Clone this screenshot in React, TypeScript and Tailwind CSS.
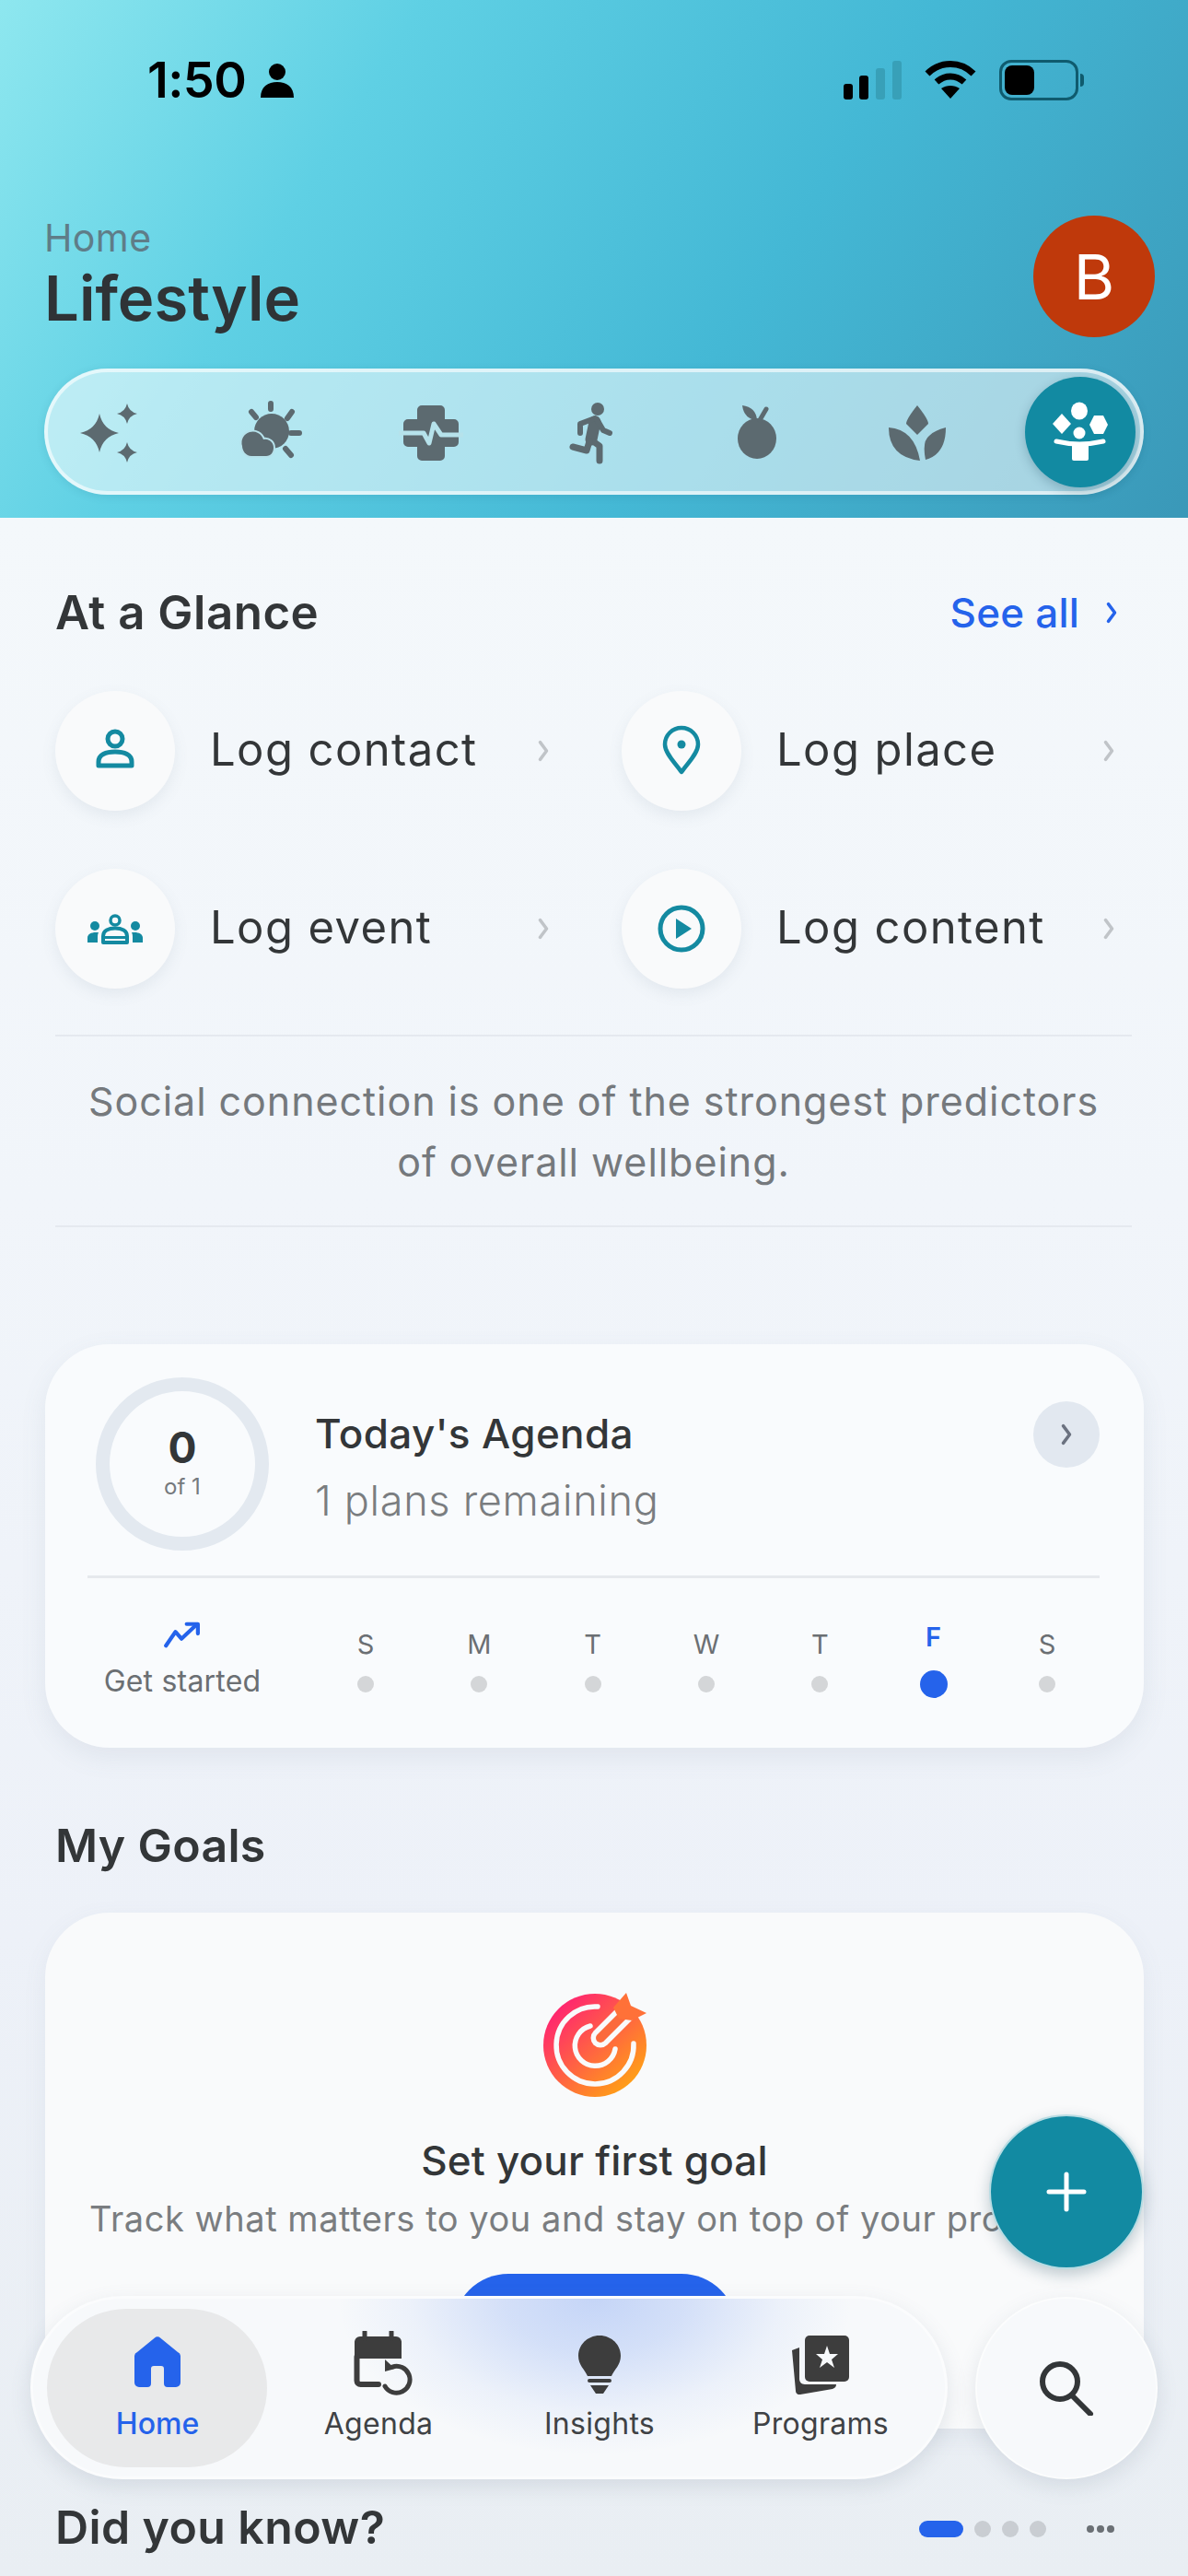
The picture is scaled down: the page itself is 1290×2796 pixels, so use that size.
import React from "react";

const star = (x: number, y: number, r: number) => {
  const k = r * 0.18;
  return `M${x} ${y - r}Q${x + k} ${y - k} ${x + r} ${y}Q${x + k} ${y + k} ${x} ${y + r}Q${x - k} ${y + k} ${x - r} ${y}Q${x - k} ${y - k} ${x} ${y - r}Z`;
};

const DARK = "#5c6a70";
const BG = "#b6e2eb";

function Box({ children }: { children: React.ReactNode }) {
  return (
    <svg viewBox="0 0 80 80" className="w-[80px] h-[80px]" fill={DARK}>
      {children}
    </svg>
  );
}

function Sparkles() {
  return (
    <Box>
      <path d={star(30, 41, 21)} />
      <path d={star(60, 20, 11)} />
      <path d={star(60, 62, 11)} />
    </Box>
  );
}
function SunCloud() {
  return (
    <Box>
      <circle cx="41" cy="39" r="19" />
      <g stroke={DARK} strokeWidth="6" strokeLinecap="round">
        <path d="M40 9V15M19 18L24 24M63 18L58 25M62 41H71M56 58L62 65" />
      </g>
      <path d="M9 55a12 12 0 0 1 23-7a9 9 0 0 1 11 9c0 5-3 9-8 9H19c-6 0-10-6-10-11Z" stroke={BG} strokeWidth="4" paintOrder="stroke" />
    </Box>
  );
}
function MedCross() {
  return (
    <Box>
      <g transform="translate(-3 0)">
        <path d="M31 11H51a5 5 0 0 1 5 5V26H66a5 5 0 0 1 5 5V51a5 5 0 0 1-5 5H56V66a5 5 0 0 1-5 5H31a5 5 0 0 1-5-5V56H16a5 5 0 0 1-5-5V31a5 5 0 0 1 5-5H26V16a5 5 0 0 1 5-5Z" />
        <path d="M6 41H33L39 52L44 31L52 43H76" fill="none" stroke={BG} strokeWidth="5" strokeLinejoin="round" />
      </g>
    </Box>
  );
}
function Runner() {
  return (
    <Box>
      <g transform="translate(-3 0)">
        <circle cx="47" cy="15" r="7" />
        <g fill="none" stroke={DARK} strokeLinecap="round" strokeLinejoin="round">
          <path d="M44 29L40 48" strokeWidth="13" />
          <path d="M28 41V31L44 25" strokeWidth="6" />
          <path d="M46 26L53 38L60 41" strokeWidth="6" />
          <path d="M42 50L49 55V71" strokeWidth="7" />
          <path d="M38 50L35 60L20 56" strokeWidth="7" />
        </g>
      </g>
    </Box>
  );
}
function Apple() {
  return (
    <Box>
      <ellipse cx="41" cy="47" rx="21" ry="22" />
      <path d="M25 11Q40 13 41 27Q27 26 25 11Z" />
      <path d="M51 15L44 27" stroke={DARK} strokeWidth="5" strokeLinecap="round" />
    </Box>
  );
}
function Lotus() {
  return (
    <Box>
      <path d="M39 11Q51 26 51 31L39 43L27 31Q27 26 39 11Z" />
      <path d="M8 35Q36 37 42 71Q8 67 8 35Z" />
      <path d="M70 35Q70 64 48 70Q44 50 52 44Q58 38 70 35Z" />
    </Box>
  );
}
function ActiveIcon() {
  return (
    <svg viewBox="0 0 80 80" className="w-[80px] h-[80px]" fill="#ffffff">
      <ellipse cx="39" cy="17" rx="9" ry="9.5" />
      <path d="M20 20L30 31L20 42L10 31Z" />
      <path d="M55 22H65L70 32L65 42H55L50 32Z" />
      <circle cx="39" cy="41" r="6.5" />
      <path d="M14 50Q39 56 65 50" fill="none" stroke="#ffffff" strokeWidth="5" strokeLinecap="round" />
      <path d="M31 54H49V69a2 2 0 0 1-2 2H33a2 2 0 0 1-2-2Z" />
    </svg>
  );
}

function Chevron({ color, w = 3, className }: { color: string; w?: number; className: string }) {
  return (
    <svg viewBox="0 0 12 24" className={className} fill="none" stroke={color} strokeWidth={w} strokeLinecap="round" strokeLinejoin="round">
      <path d="M3 4L9 12L3 20" />
    </svg>
  );
}

const TEAL = "#148aa1";

const PersonLine = () => (
  <svg viewBox="0 0 60 60" className="w-[60px] h-[60px]" fill="none" stroke={TEAL} strokeWidth="5">
    <circle cx="30" cy="17" r="8" />
    <path d="M12 46V42C12 34 20 31 30 31S48 34 48 42V46Z" strokeLinejoin="round" />
  </svg>
);
const PinLine = () => (
  <svg viewBox="0 0 60 60" className="w-[60px] h-[60px]" fill="none" stroke={TEAL} strokeWidth="4.5">
    <path d="M30 53C24 44 12 33 12 23A18 18 0 0 1 48 23C48 33 36 44 30 53Z" strokeLinejoin="round" />
    <circle cx="30" cy="23" r="4.5" fill={TEAL} stroke="none" />
  </svg>
);
const GroupLine = () => (
  <svg viewBox="0 0 60 60" className="w-[60px] h-[60px]" fill={TEAL}>
    <circle cx="30" cy="21" r="5" fill="none" stroke={TEAL} strokeWidth="3.5" />
    <path d="M17 45V38C17 32 23 29.5 30 29.5S43 32 43 38V45Z" fill="none" stroke={TEAL} strokeWidth="4" strokeLinejoin="round" />
    <path d="M17 38H43V41H17Z" />
    <circle cx="8" cy="27" r="5" />
    <circle cx="52" cy="27" r="5" />
    <path d="M0 45V40C0 36 4 34 9 34H12C11 36 11 38 11 40V45Z" />
    <path d="M60 45V40C60 36 56 34 51 34H48C49 36 49 38 49 40V45Z" />
  </svg>
);
const PlayLine = () => (
  <svg viewBox="0 0 60 60" className="w-[60px] h-[60px]" fill="none" stroke={TEAL} strokeWidth="5">
    <circle cx="30" cy="30" r="23" />
    <path d="M24 19L41 30L24 41Z" fill={TEAL} stroke="none" />
  </svg>
);

function LogItem({ label, icon, left }: { label: string; icon: React.ReactNode; left?: boolean }) {
  return (
    <div className={left ? "flex items-center h-[130px] pr-[60px]" : "flex items-center h-[130px]"}>
      <div className="w-[130px] h-[130px] rounded-full bg-[#f9fafb] shadow-[0_6px_16px_rgba(100,116,139,0.10)] flex items-center justify-center shrink-0">
        {icon}
      </div>
      <span className="ml-[38px] -mt-[3px] flex-1 text-[49px] leading-none text-[#333638] tracking-[1.4px] whitespace-nowrap">{label}</span>
      <Chevron color="#c0c4c8" className="w-[14px] h-[28px] mr-[18px]" />
    </div>
  );
}

function Day({ l, active }: { l: string; active?: boolean }) {
  return (
    <div className="w-[60px] h-[90px] flex flex-col items-center relative">
      <span className={active ? "text-[29px] leading-none font-semibold text-[#2563eb] absolute top-[7px]" : "text-[29px] leading-none text-[#6b6f73] absolute top-[15px]"}>{l}</span>
      <span className={active ? "absolute top-[58px] w-[30px] h-[30px] rounded-full bg-[#2563eb]" : "absolute top-[64px] w-[18px] h-[18px] rounded-full bg-[#d4d6d8]"} />
    </div>
  );
}

function TargetIcon() {
  return (
    <svg viewBox="0 0 120 120" className="w-[120px] h-[120px]" fill="none">
      <defs>
        <linearGradient id="tg" x1="0.1" y1="0.1" x2="0.9" y2="0.95">
          <stop offset="0" stopColor="#ff1f74" />
          <stop offset="1" stopColor="#ffa90f" />
        </linearGradient>
      </defs>
      <path d="M60 4A56 56 0 1 0 116 60A56 56 0 0 0 60 4Z" fill="url(#tg)" />
      <path d="M63 18A42 42 0 1 0 102 58" stroke="#f9fafb" strokeWidth="5.5" strokeLinecap="round" />
      <path d="M55 39A22 22 0 1 0 82 64" stroke="#f9fafb" strokeWidth="5.5" strokeLinecap="round" />
      <path d="M66 52L104 14" stroke="#f9fafb" strokeWidth="21" strokeLinecap="round" />
      <path d="M66 52L92 26" stroke="#fb6a3c" strokeWidth="10" strokeLinecap="round" />
      <path d="M94 3L99 17L116 25L100 33L86 31L80 19Z" fill="#ff7138" />
    </svg>
  );
}

function NavItem({ label, icon, active }: { label: string; icon: React.ReactNode; active?: boolean }) {
  return (
    <div className="w-[240px] flex flex-col items-center">
      <div className="h-[68px] mt-[5px] flex items-center justify-center">{icon}</div>
      <span className={active ? "mt-[15px] text-[32px] leading-[36px] text-[#2563eb] font-medium" : "mt-[15px] text-[32px] leading-[36px] text-[#3f4245] tracking-[0.3px]"}>{label}</span>
    </div>
  );
}

export default function App() {
  return (
    <div className="relative w-[1290px] h-[2796px] overflow-hidden bg-[linear-gradient(180deg,#f4f8fb_560px,#f1f5fa_1300px,#edf1f8_2100px,#e9eef3_2796px)] font-['Inter',sans-serif]">
      {/* Header */}
      <header className="h-[562px] bg-[linear-gradient(122deg,#8ee7ef_0%,#5fd0e4_28%,#44b8d5_62%,#3a98b8_100%)]">
        <div className="h-[234px] flex items-start">
          <div className="ml-[160px] mt-[64px] flex items-center h-[46px]">
            <span className="text-[54px] leading-none font-semibold text-black tracking-[-0.6px]">1:50</span>
            <svg viewBox="0 0 36 38" className="w-[36px] h-[38px] ml-[16px]" fill="#000">
              <circle cx="18" cy="10" r="9" />
              <path d="M0 38C0 26 8 21 18 21S36 26 36 38Z" />
            </svg>
          </div>
          <div className="ml-auto mr-[113px] mt-[65px] flex items-center">
            <svg viewBox="0 0 63 42" className="w-[63px] h-[42px]">
              <rect x="0" y="25" width="10" height="17" rx="3" fill="#000" />
              <rect x="17" y="16" width="10" height="26" rx="3" fill="#000" />
              <rect x="35" y="8" width="10" height="34" rx="3" fill="#38a0b8" />
              <rect x="53" y="0" width="10" height="42" rx="3" fill="#38a0b8" />
            </svg>
            <svg viewBox="0 0 58 42" className="w-[58px] h-[42px] ml-[24px]" fill="none" stroke="#000" strokeWidth="7">
              <path d="M4 14C18 0 40 0 54 14" />
              <path d="M14 23C23 15 35 15 44 23" />
              <path d="M29 41L19 30C25 26 33 26 39 30Z" fill="#000" stroke="none" />
            </svg>
            <div className="ml-[24px] w-[86px] h-[44px] rounded-[13px] border-[3px] border-[#0f5b6e] p-[3px] flex">
              <div className="w-[32px] h-full rounded-[8px] bg-black" />
            </div>
            <div className="w-[4px] h-[14px] rounded-r-full bg-[#0f5b6e] ml-[2px]" />
          </div>
        </div>
        <div className="flex items-start justify-between pl-[48px] pr-[36px] h-[166px]">
          <div className="pt-[1px]">
            <div className="text-[41px] leading-[46px] text-[#5f7d88] tracking-[0.4px]">Home</div>
            <div className="text-[67px] leading-[76px] font-semibold text-[#2f3336] mt-[5px]">Lifestyle</div>
          </div>
          <div className="w-[132px] h-[132px] rounded-full bg-[#bf390b] flex items-center justify-center text-white text-[68px] leading-none">B</div>
        </div>
        <div className="mx-[48px] w-[1194px] h-[137px] rounded-full bg-white/55 border-[4px] border-white/60 shadow-[0_2px_10px_rgba(20,80,110,0.12)] flex items-center justify-between pl-[6px] pr-[5px]">
          {[Sparkles, SunCloud, MedCross, Runner, Apple, Lotus].map((Icon, i) => (
            <div key={i} className="w-[120px] h-[120px] flex items-center justify-center">
              <Icon />
            </div>
          ))}
          <div className="w-[120px] h-[120px] rounded-full bg-[#128aa2] shadow-[0_4px_12px_rgba(15,60,80,0.25)] flex items-center justify-center">
            <ActiveIcon />
          </div>
        </div>
      </header>

      {/* At a Glance */}
      <section className="pl-[60px] pr-[61px] pt-[70px]">
        <div className="flex items-center justify-between h-[64px]">
          <h2 className="text-[51px] leading-none font-semibold text-[#333638] tracking-[0.5px]">At a Glance</h2>
          <div className="flex items-center mr-[15px] mt-[2px]">
            <span className="text-[44px] leading-none font-medium text-[#2563eb] tracking-[0.2px]">See all</span>
            <Chevron color="#2563eb" w={3} className="w-[14px] h-[28px] ml-[28px]" />
          </div>
        </div>
        <div className="grid grid-cols-[615px_1fr] gap-y-[63px] mt-[54px]">
          <LogItem left label="Log contact" icon={<PersonLine />} />
          <LogItem label="Log place" icon={<PinLine />} />
          <LogItem left label="Log event" icon={<GroupLine />} />
          <LogItem label="Log content" icon={<PlayLine />} />
        </div>
        <div className="mt-[50px] border-y-[2px] border-[#e5e9ef] h-[209px] flex items-center justify-center text-center">
          <p className="text-[43px] leading-[66px] text-[#75797d] tracking-[0.95px] whitespace-nowrap">
            Social connection is one of the strongest predictors
            <br />
            of overall wellbeing.
          </p>
        </div>
      </section>

      {/* Agenda card */}
      <section className="mx-[49px] mt-[127px] w-[1193px] h-[438px] rounded-[70px] bg-[#f9fbfd] shadow-[0_10px_28px_rgba(100,116,139,0.10)] pl-[46px] pr-[48px]">
        <div className="h-[254px] flex items-start border-b-[3px] border-[#e6e9ed]">
          <div className="mt-[36px] ml-[9px] w-[188px] h-[188px] rounded-full border-[15px] border-[#e3e9f0] flex flex-col items-center justify-center shrink-0 pb-[6px]">
            <span className="text-[46px] leading-[56px] font-bold text-[#333638]">0</span>
            <span className="text-[24px] leading-[30px] text-[#75797d]">of 1</span>
          </div>
          <div className="ml-[50px] mt-[69px] flex-1">
            <div className="text-[44px] leading-[56px] font-medium text-[#333638] tracking-[0.4px]">Today's Agenda</div>
            <div className="text-[45px] leading-[56px] mt-[17px] text-[#7a7d80] font-light tracking-[0.7px]">1 plans remaining</div>
          </div>
          <div className="mt-[62px] w-[72px] h-[72px] rounded-full bg-[#e2e8f0] flex items-center justify-center">
            <Chevron color="#6b7280" w={3} className="w-[14px] h-[28px]" />
          </div>
        </div>
        <div className="flex items-start pt-[46px]">
          <div className="w-[206px] flex flex-col items-center">
            <svg viewBox="0 0 44 32" className="w-[42px] h-[30px]" fill="none" stroke="#2563eb" strokeWidth="4.5" strokeLinecap="round" strokeLinejoin="round">
              <path d="M3 29L14 13L21 21L38 5" />
              <path d="M27 4H40V15" />
            </svg>
            <span className="mt-[18px] text-[32px] leading-[36px] text-[#6b6f73] tracking-[0.2px] whitespace-nowrap">Get started</span>
          </div>
          <div className="ml-[66px] -mt-[4px] w-[800px] flex justify-between">
            {["S", "M", "T", "W", "T", "F", "S"].map((d, i) => (
              <Day key={i} l={d} active={d === "F"} />
            ))}
          </div>
        </div>
      </section>

      {/* My Goals */}
      <section>
        <h2 className="ml-[60px] mt-[76px] text-[50px] leading-[60px] font-semibold text-[#333638] tracking-[0.3px]">My Goals</h2>
        <div className="mx-[49px] mt-[43px] w-[1193px] h-[560px] rounded-[70px] bg-[#f9fafb] shadow-[0_8px_26px_rgba(100,116,139,0.08)] flex flex-col items-center overflow-hidden">
          <div className="mt-[84px]">
            <TargetIcon />
          </div>
          <div className="mt-[38px] text-[44px] leading-[54px] font-medium text-[#333638] tracking-[0.2px]">Set your first goal</div>
          <div className="mt-[10px] self-start ml-[48px] whitespace-nowrap text-[38px] leading-[52px] text-[#7a7d80] tracking-[0.55px]">Track what matters to you and stay on top of your progress</div>
          <div className="mt-[34px] w-[308px] h-[60px] shrink-0 rounded-t-full bg-[#2563eb]" />
        </div>
      </section>

      {/* Did you know */}
      <section className="absolute left-[60px] right-[61px] top-[2710px] flex items-center justify-between h-[66px]">
        <h2 className="text-[50px] leading-none font-semibold text-[#333638] tracking-[0.4px]">Did you know?</h2>
        <div className="flex items-center gap-[12px] mt-[4px] mr-[13px]">
          <span className="w-[48px] h-[18px] rounded-full bg-[#2563eb]" />
          <span className="w-[18px] h-[18px] rounded-full bg-[#c9cdd2]" />
          <span className="w-[18px] h-[18px] rounded-full bg-[#c9cdd2]" />
          <span className="w-[18px] h-[18px] rounded-full bg-[#c9cdd2]" />
          <span className="ml-[32px] mr-[6px] flex gap-[3px]">
            <i className="w-[8px] h-[8px] rounded-full bg-[#6b7075]" />
            <i className="w-[8px] h-[8px] rounded-full bg-[#6b7075]" />
            <i className="w-[8px] h-[8px] rounded-full bg-[#6b7075]" />
          </span>
        </div>
      </section>

      {/* FAB */}
      <div className="absolute left-[1074px] top-[2295px] w-[168px] h-[168px] rounded-full bg-[#128aa2] border-[2px] border-white/70 shadow-[0_6px_16px_rgba(15,60,80,0.25)] flex items-center justify-center">
        <svg viewBox="0 0 44 44" className="w-[44px] h-[44px]" stroke="#fff" strokeWidth="5" strokeLinecap="round">
          <path d="M22 3V41M3 22H41" />
        </svg>
      </div>

      {/* Bottom nav */}
      <nav className="absolute left-[33px] top-[2492px] w-[996px] h-[199px] rounded-full bg-[#f7f9fb] border-[3px] border-white/50 shadow-[0_8px_22px_rgba(100,116,139,0.16)] flex items-center">
        <div className="absolute left-[330px] top-0 w-[560px] h-[170px] bg-[radial-gradient(ellipse_50%_100%_at_50%_0%,rgba(37,99,235,0.24)_0%,rgba(37,99,235,0.17)_35%,rgba(37,99,235,0.05)_72%,rgba(37,99,235,0)_100%)]" />
        <div className="absolute left-[15px] top-[11px] w-[239px] h-[172px] rounded-full bg-[#e8e9ea]" />
        <div className="relative ml-[15px] flex -mt-[10px]">
          <NavItem
            active
            label="Home"
            icon={
              <svg viewBox="0 0 50 56" className="w-[50px] h-[56px]" fill="#2563eb">
                <path d="M22 1.5a4 4 0 0 1 6 0L47 17a5 5 0 0 1 3 5V50a5 5 0 0 1-5 5H36a4 4 0 0 1-4-4V35a3 3 0 0 0-3-3H21a3 3 0 0 0-3 3V51a4 4 0 0 1-4 4H5a5 5 0 0 1-5-5V22a5 5 0 0 1 3-5Z" />
              </svg>
            }
          />
          <NavItem
            label="Agenda"
            icon={
              <svg viewBox="0 0 66 70" className="w-[66px] h-[70px] translate-x-[4px] translate-y-[1px]" fill="none">
                <path d="M3 12a6 6 0 0 1 6-6H48a6 6 0 0 1 6 6V30H3Z" fill="#3d3d3d" />
                <path d="M14 1V8M43 1V8" stroke="#3d3d3d" strokeWidth="5" strokeLinecap="round" />
                <path d="M5.5 28V54a4 4 0 0 0 4 4H29" stroke="#3d3d3d" strokeWidth="6" strokeLinecap="round" />
                <path d="M44 39A14.5 14.5 0 1 1 36 60" stroke="#3d3d3d" strokeWidth="5" strokeLinecap="round" />
                <path d="M36 31L36 44L47 41Z" fill="#3d3d3d" />
              </svg>
            }
          />
          <NavItem
            label="Insights"
            icon={
              <svg viewBox="0 0 48 64" className="w-[48px] h-[64px] translate-y-[3px]" fill="#3d3d3d">
                <path d="M24 0C37 0 47 10 47 22C47 32 40 37 37 44H11C8 37 1 32 1 22C1 10 11 0 24 0Z" />
                <rect x="11" y="47" width="26" height="4" rx="2" />
                <path d="M14 54H34L28 63H20Z" />
              </svg>
            }
          />
          <NavItem
            label="Programs"
            icon={
              <svg viewBox="0 0 62 64" className="w-[62px] h-[64px] translate-y-[3px]" fill="#3d3d3d">
                <path d="M0 16L4 60a4 4 0 0 0 5 4L44 58C47 57 48 55 48 53H14C10 53 8 50 8 47V13Z" />
                <rect x="14" y="0" width="48" height="50" rx="5" />
                <path d="M38 11L41 20L50 20L43 26L46 35L38 29L30 35L33 26L26 20L35 20Z" fill="#f7f9fb" />
              </svg>
            }
          />
        </div>
      </nav>

      {/* Search */}
      <div className="absolute left-[1059px] top-[2493px] w-[198px] h-[198px] rounded-full bg-[#f7f9fb] border-[2px] border-white/60 shadow-[0_8px_22px_rgba(100,116,139,0.16)] flex items-center justify-center">
        <svg viewBox="0 0 60 60" className="w-[60px] h-[60px]" fill="none" stroke="#333638" strokeWidth="6" strokeLinecap="round">
          <circle cx="23" cy="23" r="19" />
          <path d="M36 38L56 58" />
        </svg>
      </div>
    </div>
  );
}
